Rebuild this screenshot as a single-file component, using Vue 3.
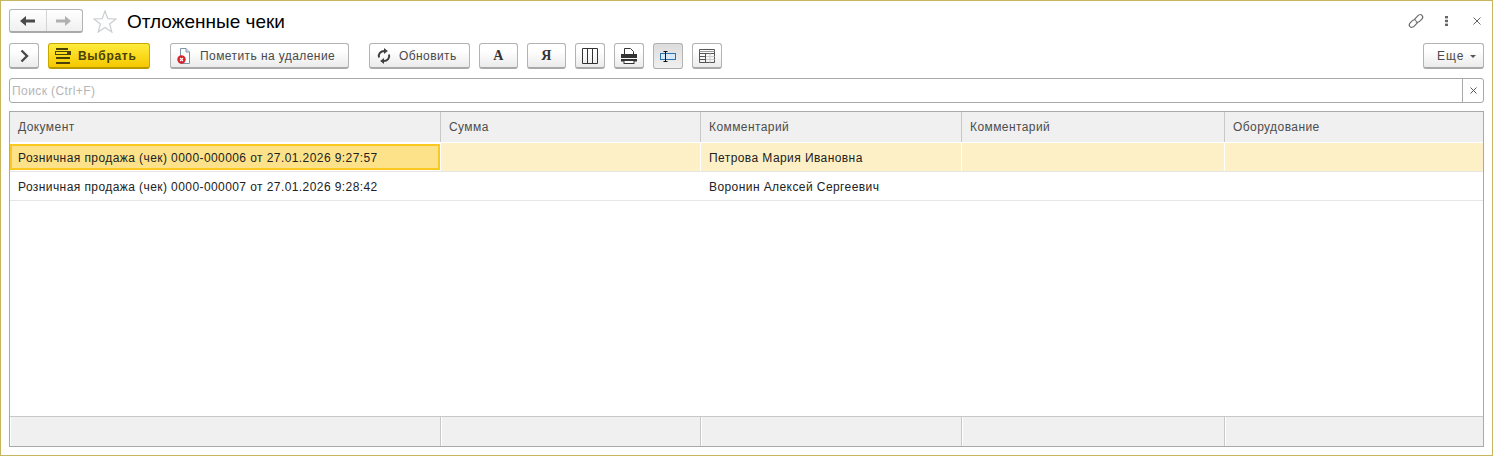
<script setup>
const cols = ['Документ', 'Сумма', 'Комментарий', 'Комментарий', 'Оборудование']
const rows = [
  { cells: ['Розничная продажа (чек) 0000-000006 от 27.01.2026 9:27:57', '', 'Петрова Мария Ивановна', '', ''], selected: true },
  { cells: ['Розничная продажа (чек) 0000-000007 от 27.01.2026 9:28:42', '', 'Воронин Алексей Сергеевич', '', ''], selected: false }
]
</script>

<template>
  <div class="form">
    <div class="titlebar">
      <div class="nav">
        <button class="nav-btn">
          <svg width="16" height="12" viewBox="0 0 16 12"><path d="M0 6 L6 1 V4.5 H15 V7.5 H6 V11 Z" fill="#4a4a4a"/></svg>
        </button>
        <button class="nav-btn">
          <svg width="16" height="12" viewBox="0 0 16 12"><path d="M15 6 L9 1 V4.5 H0 V7.5 H9 V11 Z" fill="#b0b0b0"/></svg>
        </button>
      </div>
      <svg class="star" width="24" height="23" viewBox="0 0 24 23"><path d="M12 1 L14.8 8.7 L23 9 L16.6 14 L18.8 22 L12 17.4 L5.2 22 L7.4 14 L1 9 L9.2 8.7 Z" fill="none" stroke="#c9ced2" stroke-width="1.2"/></svg>
      <div class="title">Отложенные чеки</div>
      <div class="win-icons">
        <svg width="18" height="18" viewBox="0 0 18 18" fill="none" stroke="#666" stroke-width="1.1"><path d="M7.2 7.6 L11 3.6 C12.2 2.4 14 2.4 15 3.4 C16 4.5 16 6 14.8 7.2 L12.6 9.4 C11.4 10.6 9.8 10.5 8.8 9.5"/><path d="M10.8 10.4 L7 14.4 C5.8 15.6 4 15.6 3 14.6 C2 13.5 2 12 3.2 10.8 L5.4 8.6 C6.6 7.4 8.2 7.5 9.2 8.5"/></svg>
        <svg class="dots" width="3" height="10" viewBox="0 0 3 10" fill="#666"><rect width="3" height="2.4"/><rect y="3.8" width="3" height="2.4"/><rect y="7.6" width="3" height="2.4"/></svg>
        <svg class="close" width="8" height="8" viewBox="0 0 8 8" stroke="#666" stroke-width="1"><path d="M0.5 0.5 L7.5 7.5 M7.5 0.5 L0.5 7.5"/></svg>
      </div>
    </div>

    <div class="toolbar">
      <button class="btn w30">
        <svg width="9" height="14" viewBox="0 0 9 14" fill="none" stroke="#4a4a4a" stroke-width="2.4"><path d="M1.5 1.5 L7 7 L1.5 12.5"/></svg>
      </button>
      <button class="btn primary ml9">
        <svg width="16" height="16" viewBox="0 0 16 16" fill="#4a4200"><rect x="1" y="0" width="12" height="2"/><rect x="0.5" y="3.5" width="15" height="3" fill="none" stroke="#4a4200"/><rect x="12" y="3" width="4" height="4"/><rect x="1" y="9" width="14" height="2"/><rect x="1" y="14" width="14" height="2"/></svg>
        <span>Выбрать</span>
      </button>
      <button class="btn delete ml20">
        <span class="del-icon">
          <svg width="14" height="16" viewBox="0 0 14 16"><path d="M3.5 0.5 H9 L12.5 4 V15.5 H3.5 Z" fill="#fff" stroke="#7f93a8"/><path d="M9 0.5 V4 H12.5" fill="#dfe6ee" stroke="#7f93a8"/><circle cx="4.5" cy="11.5" r="4.2" fill="#d8232a"/><path d="M3 10 L6 13 M6 10 L3 13" stroke="#fff" stroke-width="1.1"/></svg>
        </span>
        <span>Пометить на удаление</span>
      </button>
      <button class="btn refresh ml20">
        <svg width="14" height="16" viewBox="0 0 14 16" fill="none" stroke="#3f3f3f" stroke-width="2"><path d="M2 9.5 C1 6 3.5 3 7.5 3"/><path d="M12 6.5 C13 10 10.5 13 6.5 13"/><path d="M7 0 L10.8 3 L7 6 Z" fill="#3f3f3f" stroke="none"/><path d="M7 10 L3.2 13 L7 16 Z" fill="#3f3f3f" stroke="none"/></svg>
        <span>Обновить</span>
      </button>
      <button class="btn w39 ml9 letter">А</button>
      <button class="btn w39 ml9 letter">Я</button>
      <button class="btn w30 ml9">
        <svg width="16" height="16" viewBox="0 0 16 16" fill="none" stroke="#333"><path d="M0.5 0.5 H15.5 V15.5 H0.5 Z M5.5 0.5 V15.5 M10.5 0.5 V15.5"/></svg>
      </button>
      <button class="btn w30 ml9">
        <svg width="16" height="16" viewBox="0 0 16 16"><path d="M3.5 0.5 H9.5 L12.5 3.5 V7 H3.5 Z" fill="#fff" stroke="#333"/><rect x="0" y="6" width="16" height="4" fill="#333"/><rect x="0" y="11" width="16" height="2.5" fill="#333"/><rect x="3" y="12.5" width="10" height="3" fill="#fff" stroke="#333"/></svg>
      </button>
      <button class="btn w30 ml9 active">
        <svg width="16" height="11" viewBox="0 0 16 11"><rect x="0.5" y="2.5" width="15" height="6" fill="#d8e8f4" stroke="#2a73ae"/><path d="M3.5 0.5 H7.5 M5.5 0.5 V10.5 M3.5 10.5 H7.5" stroke="#111" fill="none"/></svg>
      </button>
      <button class="btn w30 ml9">
        <svg width="16" height="14" viewBox="0 0 16 14" fill="none"><path d="M0.5 0.5 H15.5 V13.5 H0.5 Z" stroke="#555"/><path d="M0.5 4.5 H15.5" stroke="#555"/><path d="M0.5 2.5 H15.5" stroke="#999"/><path d="M0.5 7.5 H7 M0.5 10.5 H7 M6.5 4.5 V13.5" stroke="#555"/><path d="M7 7.5 H15.5 M7 10.5 H15.5 M11 4.5 V13.5" stroke="#ccc"/></svg>
      </button>
      <button class="btn more">
        <span>Еще</span>
        <i class="caret"></i>
      </button>
    </div>

    <div class="search">
      <div class="search-input">Поиск (Ctrl+F)</div>
      <div class="search-clear">
        <svg width="7" height="7" viewBox="0 0 7 7" stroke="#555" stroke-width="1"><path d="M0.5 0.5 L6.5 6.5 M6.5 0.5 L0.5 6.5"/></svg>
      </div>
    </div>

    <div class="table">
      <div class="grid head">
        <div v-for="(c, i) in cols" :key="i" class="hcell">{{ c }}</div>
      </div>
      <div class="body">
        <div v-for="(r, ri) in rows" :key="ri" class="grid row" :class="{ selected: r.selected }">
          <div v-for="(c, i) in r.cells" :key="i" class="cell" :class="{ current: r.selected && i === 0 }">{{ c }}</div>
        </div>
      </div>
      <div class="grid foot">
        <div v-for="(c, i) in cols" :key="i" class="fcell"></div>
      </div>
    </div>
  </div>
</template>

<style>
html, body { margin: 0; background: #fff; }
</style>

<style scoped>
.form {
  box-sizing: border-box;
  width: 1493px;
  height: 456px;
  border: 1px solid #c8b560;
  padding: 8px 8px 0;
  background: #fff;
  font-family: "Liberation Sans", Arial, sans-serif;
  font-size: 12px;
  letter-spacing: 0.42px;
  color: #333;
  display: flex;
  flex-direction: column;
}
button { font: inherit; letter-spacing: inherit; color: inherit; margin: 0; cursor: default; }
.titlebar { display: flex; align-items: center; height: 24px; }
.nav {
  display: flex;
  box-sizing: border-box;
  width: 74px;
  height: 24px;
  border: 1px solid #b3b3b3;
  border-bottom: 2px solid #a9a9a9;
  border-radius: 3px;
  background: linear-gradient(#fff, #f0f0f0);
}
.nav-btn {
  flex: 1;
  border: 0;
  padding: 1px 0 0;
  background: none;
  display: flex;
  align-items: center;
  justify-content: center;
}
.nav-btn + .nav-btn { border-left: 1px solid #d4d4d4; }
.star { margin-left: 10px; }
.title { margin-left: 10px; padding-top: 2px; font-size: 19px; letter-spacing: 0; color: #000; line-height: 24px; }
.win-icons { margin-left: auto; display: flex; align-items: center; }
.dots { margin-left: 20px; }
.close { margin-left: 25px; margin-right: 3px; }

.toolbar { display: flex; margin-top: 10px; height: 26px; }
.btn {
  box-sizing: border-box;
  height: 26px;
  padding: 1px 0 0;
  border: 1px solid #b3b3b3;
  border-bottom: 2px solid #a9a9a9;
  border-radius: 3px;
  background: linear-gradient(#fff 30%, #ebebeb);
  display: flex;
  align-items: center;
  justify-content: center;
  color: #4a4a4a;
  flex: none;
}
.w30 { width: 30px; }
.w39 { width: 39px; }
.ml9 { margin-left: 9px; }
.ml20 { margin-left: 20px; }
.primary {
  width: 102px;
  background: linear-gradient(#ffec3d, #f5c800);
  border-color: #c9a800;
  border-bottom-color: #b89a00;
  font-weight: bold;
  letter-spacing: 0.7px;
  color: #4a4200;
  gap: 7px;
  justify-content: flex-start;
  padding-left: 6px;
}
.delete { width: 179px; justify-content: flex-start; padding-left: 6px; }
.delete span:last-child { margin-left: 9px; }
.del-icon { display: flex; }
.refresh { width: 101px; gap: 8px; justify-content: flex-start; padding-left: 7px; }
.letter { font-family: "Liberation Serif", serif; font-weight: bold; font-size: 14px; color: #333; }
.active {
  background: linear-gradient(#dcdcdc, #f0f0f0);
  border: 1px solid #b3b3b3;
  border-bottom: 1px solid #a9a9a9;
}
.more { margin-left: auto; width: 61px; gap: 6px; justify-content: flex-start; padding-left: 13px; letter-spacing: 1px; }
.caret { width: 0; height: 0; border: 3px solid transparent; border-top: 3px solid #555; border-bottom: 0; }

.search {
  display: flex;
  box-sizing: border-box;
  height: 25px;
  margin-top: 9px;
  border: 1px solid #a9a9a9;
  border-radius: 3px;
}
.search-input { flex: 1; padding-left: 2px; padding-top: 1px; line-height: 23px; color: #b5b5b5; }
.search-clear {
  width: 20px;
  box-sizing: content-box;
  border-left: 1px solid #a9a9a9;
  display: flex;
  align-items: center;
  justify-content: center;
}

.table {
  box-sizing: border-box;
  height: 336px;
  margin-top: 8px;
  border: 1px solid #a9a9a9;
  display: flex;
  flex-direction: column;
}
.grid { display: grid; grid-template-columns: 430px 260px 261px 263px 1fr; }
.head { height: 31px; box-sizing: border-box; padding-bottom: 1px; }
.hcell {
  box-sizing: border-box;
  height: 30px;
  padding: 1px 0 0 8px;
  background: #f0f0f0;
  border-left: 1px solid #c8c8c8;
  line-height: 29px;
  color: #4d4d4d;
}
.hcell:first-child { border-left: 0; }
.body { flex: 1; }
.row { height: 29px; box-sizing: border-box; border-bottom: 1px solid #e6e6e6; color: #222; }
.cell { box-sizing: border-box; height: 28px; padding: 1px 0 0 8px; line-height: 28px; border-left: 1px solid transparent; }
.cell:first-child { border-left: 0; }
.selected .cell { background: #fdf0c6; border-left-color: #fff; }
.cell.current {
  height: 26px;
  margin-top: 1px;
  padding: 0 0 0 6px;
  background: #fde28a;
  border: 2px solid #fbc81f;
  line-height: 24px;
}
.foot { height: 29px; border-top: 1px solid #c8c8c8; }
.fcell { background: #f0f0f0; border-left: 1px solid #c8c8c8; box-shadow: inset 1px 0 0 #fff; }
.fcell:first-child { border-left: 0; box-shadow: inset 1px 0 0 #fff; }
</style>
